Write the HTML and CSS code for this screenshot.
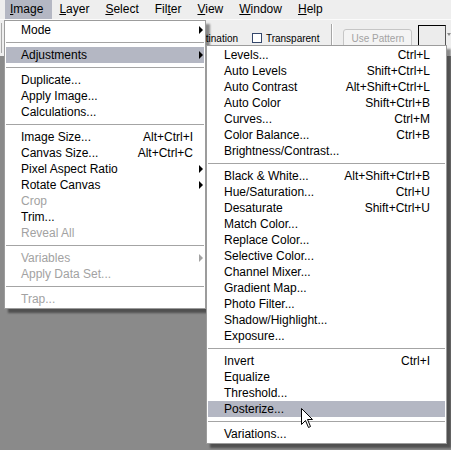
FILE: index.html
```html
<!DOCTYPE html>
<html>
<head>
<meta charset="utf-8">
<link rel="stylesheet" href="styles.css">
</head>
<body>
<div class="screen">
  <div class="menubar">
    <span class="mb-item active"><u>I</u>mage</span>
    <span class="mb-item"><u>L</u>ayer</span>
    <span class="mb-item"><u>S</u>elect</span>
    <span class="mb-item">Fil<u>t</u>er</span>
    <span class="mb-item"><u>V</u>iew</span>
    <span class="mb-item"><u>W</u>indow</span>
    <span class="mb-item"><u>H</u>elp</span>
  </div>
  <div class="toolbar">
    <span class="grip"></span>
    <span class="tb-label dest">Destination</span>
    <span class="check"></span>
    <span class="tb-label transp">Transparent</span>
    <span class="tb-sep"></span>
    <span class="btn">Use Pattern</span>
    <span class="swatch"></span>
    <span class="drop"></span>
  </div>
  <div class="workspace"></div>

  <div class="menu main-menu">
    <div class="item"><span class="label">Mode</span><span class="arrow-col"><i class="tri"></i></span></div>
    <div class="sep"></div>
    <div class="item hl"><span class="label">Adjustments</span><span class="arrow-col"><i class="tri"></i></span></div>
    <div class="sep"></div>
    <div class="item"><span class="label">Duplicate...</span><span class="arrow-col"></span></div>
    <div class="item"><span class="label">Apply Image...</span><span class="arrow-col"></span></div>
    <div class="item"><span class="label">Calculations...</span><span class="arrow-col"></span></div>
    <div class="sep"></div>
    <div class="item"><span class="label">Image Size...</span><span class="key">Alt+Ctrl+I</span><span class="arrow-col"></span></div>
    <div class="item"><span class="label">Canvas Size...</span><span class="key">Alt+Ctrl+C</span><span class="arrow-col"></span></div>
    <div class="item"><span class="label">Pixel Aspect Ratio</span><span class="arrow-col"><i class="tri"></i></span></div>
    <div class="item"><span class="label">Rotate Canvas</span><span class="arrow-col"><i class="tri"></i></span></div>
    <div class="item dis"><span class="label">Crop</span><span class="arrow-col"></span></div>
    <div class="item"><span class="label">Trim...</span><span class="arrow-col"></span></div>
    <div class="item dis"><span class="label">Reveal All</span><span class="arrow-col"></span></div>
    <div class="sep"></div>
    <div class="item dis"><span class="label">Variables</span><span class="arrow-col"><i class="tri"></i></span></div>
    <div class="item dis"><span class="label">Apply Data Set...</span><span class="arrow-col"></span></div>
    <div class="sep"></div>
    <div class="item dis"><span class="label">Trap...</span><span class="arrow-col"></span></div>
  </div>

  <div class="menu sub-menu">
    <div class="item"><span class="label">Levels...</span><span class="key">Ctrl+L</span></div>
    <div class="item"><span class="label">Auto Levels</span><span class="key">Shift+Ctrl+L</span></div>
    <div class="item"><span class="label">Auto Contrast</span><span class="key">Alt+Shift+Ctrl+L</span></div>
    <div class="item"><span class="label">Auto Color</span><span class="key">Shift+Ctrl+B</span></div>
    <div class="item"><span class="label">Curves...</span><span class="key">Ctrl+M</span></div>
    <div class="item"><span class="label">Color Balance...</span><span class="key">Ctrl+B</span></div>
    <div class="item"><span class="label">Brightness/Contrast...</span></div>
    <div class="sep"></div>
    <div class="item"><span class="label">Black &amp; White...</span><span class="key">Alt+Shift+Ctrl+B</span></div>
    <div class="item"><span class="label">Hue/Saturation...</span><span class="key">Ctrl+U</span></div>
    <div class="item"><span class="label">Desaturate</span><span class="key">Shift+Ctrl+U</span></div>
    <div class="item"><span class="label">Match Color...</span></div>
    <div class="item"><span class="label">Replace Color...</span></div>
    <div class="item"><span class="label">Selective Color...</span></div>
    <div class="item"><span class="label">Channel Mixer...</span></div>
    <div class="item"><span class="label">Gradient Map...</span></div>
    <div class="item"><span class="label">Photo Filter...</span></div>
    <div class="item"><span class="label">Shadow/Highlight...</span></div>
    <div class="item"><span class="label">Exposure...</span></div>
    <div class="sep"></div>
    <div class="item"><span class="label">Invert</span><span class="key">Ctrl+I</span></div>
    <div class="item"><span class="label">Equalize</span></div>
    <div class="item"><span class="label">Threshold...</span></div>
    <div class="item hl"><span class="label">Posterize...</span></div>
    <div class="sep"></div>
    <div class="item"><span class="label">Variations...</span></div>
  </div>

  <svg class="cursor" width="13" height="21" viewBox="0 0 13 21">
    <path d="M0.5 0.5 L0.5 16.5 L4.5 12.5 L7.5 19.5 L9.5 18.5 L6.5 11.5 L11.5 11.5 Z" fill="#fff" stroke="#000" stroke-width="1" stroke-linejoin="miter"/>
  </svg>
</div>
</body>
</html>
```

FILE: styles.css
```css
* { box-sizing: border-box; margin: 0; padding: 0; }
html, body { width: 451px; height: 450px; overflow: hidden; }
body {
  font-family: "Liberation Sans", Arial, sans-serif;
  font-size: 12px;
  color: #000;
  background: #8a8a8a;
}
.screen {
  position: relative;
  width: 451px;
  height: 450px;
  display: flex;
  flex-direction: column;
}

/* menubar */
.menubar {
  height: 20px;
  background: #eeeeee;
  display: flex;
  gap: 4px;
  padding-left: 5px;
  border-bottom: 1px solid #fbfbfb;
}
.mb-item {
  height: 19px;
  line-height: 19px;
  padding: 0 7px 0 5px;
  white-space: nowrap;
}
.mb-item.active { background: #b4b7c3; padding-right: 9px; margin-right: -2px; }
.mb-item u { text-decoration: underline; text-underline-offset: 1px; }

/* toolbar */
.toolbar {
  height: 36px;
  background: #eeeeee;
  display: flex;
  align-items: center;
  font-size: 10px;
}
.grip { width: 1px; height: 30px; margin-left: 1px; background: #a8a8a8; }
.tb-label { white-space: nowrap; }
.dest { margin-left: 186px; }
.check {
  width: 10px; height: 10px;
  margin-left: 14px;
  border: 1px solid #34476b;
  background: #fff;
}
.transp { margin-left: 4px; }
.tb-sep {
  width: 2px; height: 28px;
  margin-left: 12px;
  border-left: 1px solid #a6a6a6;
  border-right: 1px solid #fff;
}
.btn {
  margin-left: 10px;
  width: 70px; height: 19px;
  border: 1px solid #c6c6c6;
  border-radius: 3px;
  background: #f4f4f4;
  color: #a3a3a3;
  text-align: center;
  line-height: 17px;
  white-space: nowrap;
}
.swatch {
  align-self: flex-start;
  margin-top: 5px;
  margin-left: 6px;
  width: 28px; height: 28px;
  border: 1px solid #000;
  border-right-color: #555;
  background: #ececec;
}
.drop {
  margin-left: 1px;
  width: 0; height: 0;
  border-top: 3px solid #8a8a8a;
  border-left: 2px solid transparent;
  border-right: 2px solid transparent;
  align-self: flex-start;
  margin-top: 13px;
}

.workspace { flex: 1; background: #8a8a8a; }

/* menus */
.menu {
  position: absolute;
  background: #fff;
  border: 1px solid #9c9c9c;
  padding: 1px;
  box-shadow: 4px 4px 2px rgba(0, 0, 0, 0.42);
}
.main-menu { left: 4px; top: 20px; width: 202px; }
.sub-menu { left: 206px; top: 45px; width: 241px; }

.item {
  display: flex;
  align-items: center;
  height: 16px;
  line-height: 16px;
  white-space: nowrap;
}
.main-menu .item { padding-left: 15px; }
.sub-menu .item { padding-left: 16px; padding-right: 15px; }
.item .label { flex: 1; }
.item.hl { background: #b4b7c3; }
.item.dis { color: #a2a2a2; }
.arrow-col {
  width: 11px;
  height: 16px;
  display: flex;
  align-items: center;
  padding-left: 6px;
}
.tri {
  display: block;
  width: 0; height: 0;
  border-left: 4px solid #000;
  border-top: 4px solid transparent;
  border-bottom: 4px solid transparent;
}
.item.dis .tri { border-left-color: #a2a2a2; }

.sep {
  height: 9px;
  display: flex;
  align-items: center;
}
.sep::before {
  content: "";
  flex: 1;
  height: 1px;
  background: #a4a4a4;
}

.cursor {
  position: absolute;
  left: 301px;
  top: 408px;
}
```
